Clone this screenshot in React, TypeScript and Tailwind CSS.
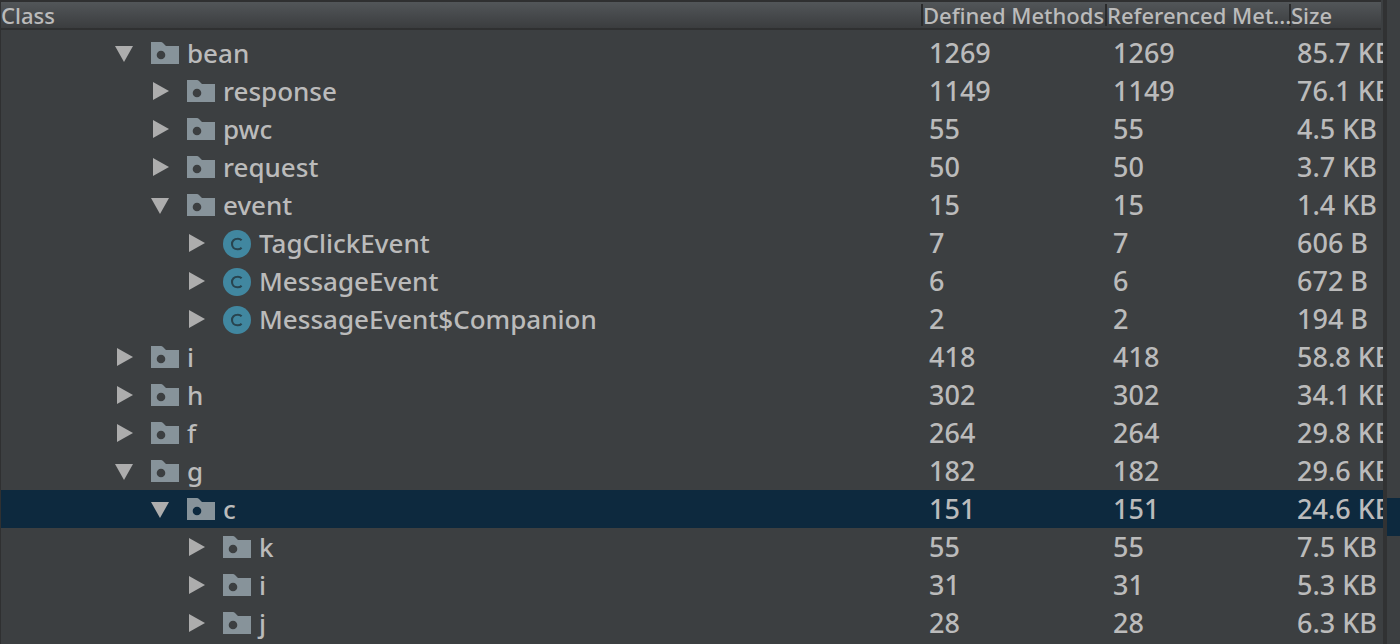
import { useState } from "react";
import clsx from "clsx";

type Row = {
  id: number;
  name: string;
  kind: "package" | "class";
  depth: 0 | 1 | 2;
  open?: boolean;
  defined: number;
  referenced: number;
  size: string;
};

const rows: Row[] = [
  { id: 1, name: "bean", kind: "package", depth: 0, open: true, defined: 1269, referenced: 1269, size: "85.7 KB" },
  { id: 2, name: "response", kind: "package", depth: 1, defined: 1149, referenced: 1149, size: "76.1 KB" },
  { id: 3, name: "pwc", kind: "package", depth: 1, defined: 55, referenced: 55, size: "4.5 KB" },
  { id: 4, name: "request", kind: "package", depth: 1, defined: 50, referenced: 50, size: "3.7 KB" },
  { id: 5, name: "event", kind: "package", depth: 1, open: true, defined: 15, referenced: 15, size: "1.4 KB" },
  { id: 6, name: "TagClickEvent", kind: "class", depth: 2, defined: 7, referenced: 7, size: "606 B" },
  { id: 7, name: "MessageEvent", kind: "class", depth: 2, defined: 6, referenced: 6, size: "672 B" },
  { id: 8, name: "MessageEvent$Companion", kind: "class", depth: 2, defined: 2, referenced: 2, size: "194 B" },
  { id: 9, name: "i", kind: "package", depth: 0, defined: 418, referenced: 418, size: "58.8 KB" },
  { id: 10, name: "h", kind: "package", depth: 0, defined: 302, referenced: 302, size: "34.1 KB" },
  { id: 11, name: "f", kind: "package", depth: 0, defined: 264, referenced: 264, size: "29.8 KB" },
  { id: 12, name: "g", kind: "package", depth: 0, open: true, defined: 182, referenced: 182, size: "29.6 KB" },
  { id: 13, name: "c", kind: "package", depth: 1, open: true, defined: 151, referenced: 151, size: "24.6 KB" },
  { id: 14, name: "k", kind: "package", depth: 2, defined: 55, referenced: 55, size: "7.5 KB" },
  { id: 15, name: "i", kind: "package", depth: 2, defined: 31, referenced: 31, size: "5.3 KB" },
  { id: 16, name: "j", kind: "package", depth: 2, defined: 28, referenced: 28, size: "6.3 KB" },
];

const indent = {
  0: "pl-[114px]",
  1: "pl-[150px]",
  2: "pl-[186px]",
};

function Arrow({ open }: { open?: boolean }) {
  return (
    <svg width="18" height="18" viewBox="0 0 18 18" fill="#adadad">
      {open ? <path d="M0 2h18L9 18z" /> : <path d="M2 0v18l16-9z" />}
    </svg>
  );
}

function PackageIcon() {
  return (
    <svg width="28" height="28" viewBox="0 0 28 28" className="shrink-0">
      <path
        fill="#87939a"
        fillRule="evenodd"
        d="M0 3h10q1 0 2 1l3 3h13v18H0zM10 11.7a4.3 4.3 0 1 0 0 8.6a4.3 4.3 0 1 0 0-8.6z"
      />
    </svg>
  );
}

function ClassIcon() {
  return (
    <svg width="28" height="30" viewBox="0 0 28 30" className="shrink-0">
      <circle cx="14" cy="16" r="14" fill="#4187a0" />
      <path
        d="M18.6 12.3A5.4 5.4 0 0 0 14.4 10.7C11.2 10.7 9 13 9 16s2.2 5.3 5.4 5.3a5.4 5.4 0 0 0 4.2-1.6"
        fill="none"
        stroke="#28444f"
        strokeWidth="2.1"
      />
    </svg>
  );
}

function HeaderCell({ label, first, last }: { label: string; first?: boolean; last?: boolean }) {
  return (
    <th scope="col" className={clsx("p-0 pb-1 font-medium", last && "pr-0.5")}>
      <div className="h-[30px] border-y-2 border-[#2f3031] bg-linear-to-b from-[#525659] to-[#3b3d3f] py-0.5">
        <div
          className={clsx(
            "h-[22px] whitespace-nowrap text-[22px] leading-[22px]",
            !first && "border-l-2 border-[#2a2b2c]",
          )}
        >
          {label}
        </div>
      </div>
    </th>
  );
}

export default function App() {
  const [selected, setSelected] = useState(13);

  return (
    <div className="flex h-screen overflow-hidden bg-[#3c3f41] font-['Noto_Sans',sans-serif] text-[#bbbbbb]">
      <main className="min-w-0 flex-1 overflow-hidden border-l border-[#2f3031]">
        <table className="w-full table-fixed border-collapse text-left">
          <colgroup>
            <col />
            <col className="w-[184px]" />
            <col className="w-[184px]" />
            <col className="w-[94px]" />
          </colgroup>
          <thead>
            <tr>
              <HeaderCell label="Class" first />
              <HeaderCell label="Defined Methods" />
              <HeaderCell label="Referenced Met..." />
              <HeaderCell label="Size" last />
            </tr>
          </thead>
          <tbody className="text-[27px] leading-[38px] font-medium">
            {rows.map((row) => (
              <tr
                key={row.id}
                onClick={() => setSelected(row.id)}
                className={clsx("h-[38px]", row.id === selected && "bg-[#0d293e]")}
              >
                <td className="p-0">
                  <div className={clsx("flex h-[38px] items-center", indent[row.depth])}>
                    <button
                      type="button"
                      aria-label={`Toggle ${row.name}`}
                      aria-expanded={!!row.open}
                      className="mr-[18px] shrink-0"
                    >
                      <Arrow open={row.open} />
                    </button>
                    {row.kind === "package" ? <PackageIcon /> : <ClassIcon />}
                    <span className="ml-2 whitespace-nowrap text-[26px]">{row.name}</span>
                  </div>
                </td>
                <td className="p-0 pl-2">{row.defined}</td>
                <td className="p-0 pl-2">{row.referenced}</td>
                <td className="overflow-hidden whitespace-nowrap p-0 pl-2">{row.size}</td>
              </tr>
            ))}
          </tbody>
        </table>
      </main>
      <div className="w-1 bg-[#313233]" />
      <aside className="w-[13px] pt-[498px]">
        <div className="h-[38px] bg-[#0d293e]" />
      </aside>
    </div>
  );
}
